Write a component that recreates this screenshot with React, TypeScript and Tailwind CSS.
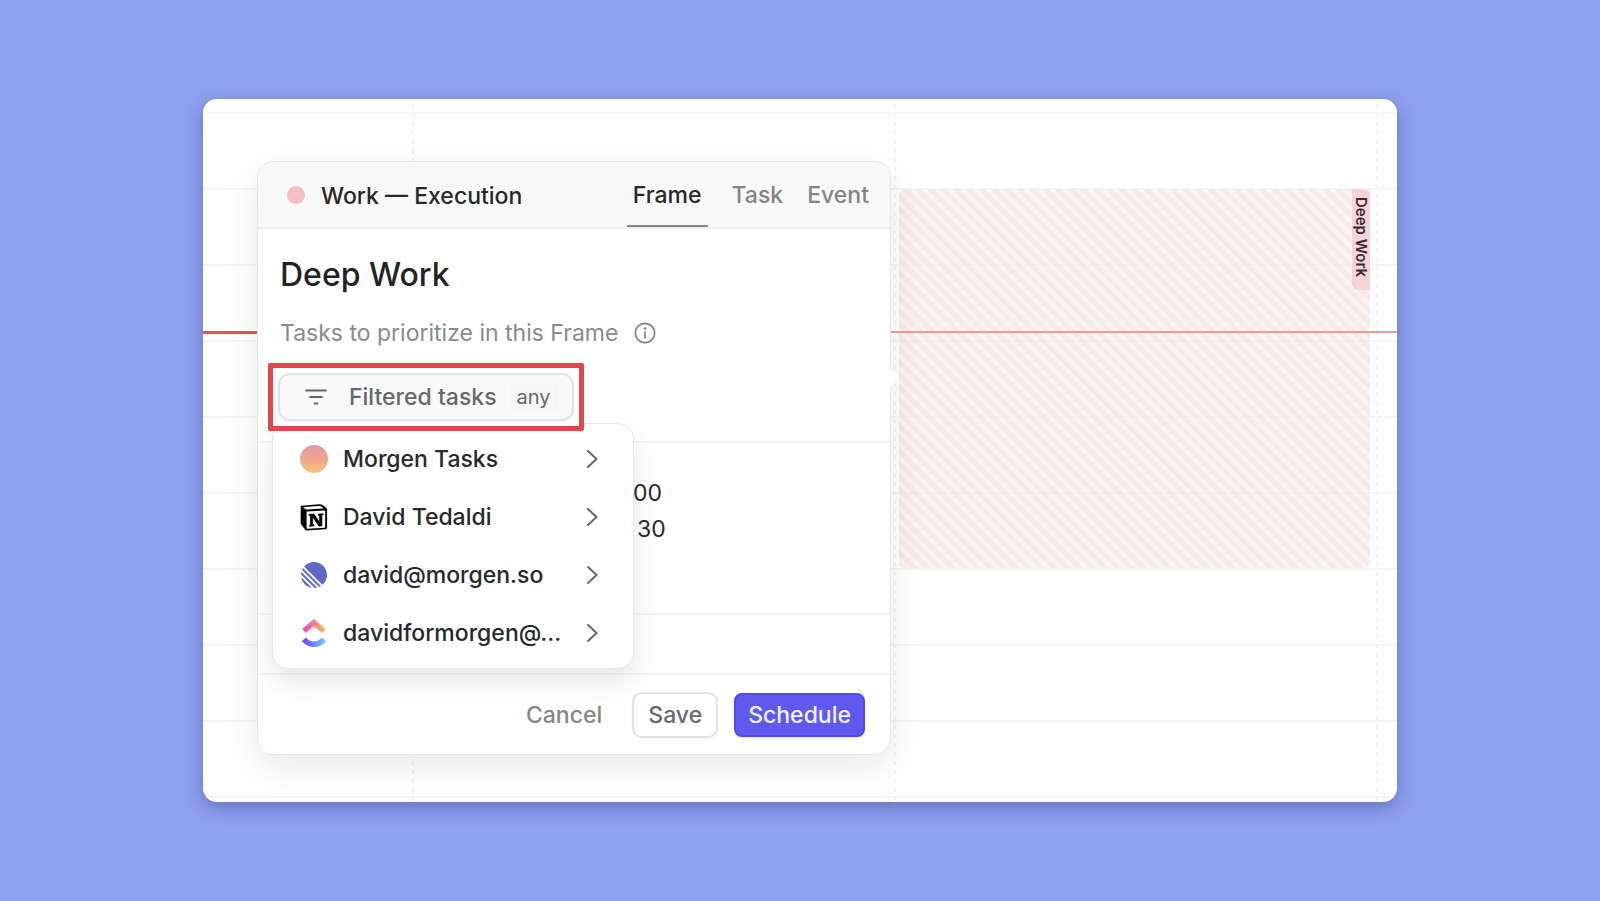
import React, { useState } from 'react';

const hours = [0, 1, 2, 3, 4, 5, 6, 7, 8];
const tabs = ['Frame', 'Task', 'Event'];

const MorgenIcon = () => (
  <span className="block size-7 rounded-full bg-linear-to-b from-[#e397a8] via-[#eda693] to-[#f4c66c]" />
);

const NotionIcon = () => (
  <svg viewBox="0 0 28 28" className="size-7">
    <path d="M1.5 2.8 19.3 1.2c1.2-.1 1.7 0 2.6.6l4.2 2.900c.8.6 1 .8 1 1.7v17.900c0 1.200-.5 1.900-1.900 2L7.400 27.400c-1.100.1-1.700-.2-2.300-1L1.400 21.700c-.5-.8-.7-1.300-.7-2V4.600c0-.9.3-1.700.8-1.800z" fill="#000" />
    <path d="M3.600 4 19.100 2.900c.8-.1 1 0 1.600.4l2.600 1.800c.2.2.1.4-.2.4L7 6.500c-.8 0-1.100-.1-1.600-.5L3.400 4.500c-.2-.2-.1-.4.2-.5z" fill="#fff" />
    <path d="M7.200 8.400 24.300 7.400c.6 0 .9.2.9.8v15.600c0 .6-.2.9-.9 1L7.600 25.700c-.7 0-1-.2-1-.9V9.200c0-.5.2-.8.6-.8z" fill="#fff" />
    <path d="M9.300 11.300 14 11l5.600 8.500V12.600l-1.500-.3c0-.8.4-1.300 1.200-1.300l4.100-.2v.6l-1.500.5v10.700c-.7.3-1.400.6-2 .6-.9 0-1.200-.3-1.900-1.200L12.600 13.800v7.700l1.700.4s0 1-1.400 1.100l-3.700.2c-.1-.2 0-.7.3-.8l1-.3V12.500l-1.600-.1c0-.5 0-1 .4-1.100z" fill="#000" stroke="#000" strokeWidth=".7" />
  </svg>
);

const LinearIcon = () => (
  <svg viewBox="0 0 100 100" className="size-[26px]">
    <path
      fill="#5f68c9"
      d="M1.225 61.523c-.222-.949.908-1.546 1.597-.857l36.512 36.512c.69.69.092 1.820-.857 1.597-18.425-4.323-32.930-18.827-37.252-37.252ZM.002 46.889a.99.990 0 0 0 .290.760L52.350 99.708c.201.200.478.307.760.290 2.370-.149 4.695-.460 6.963-.927.765-.157 1.030-1.096.478-1.648L2.576 39.448c-.552-.551-1.491-.286-1.648.479a50.067 50.067 0 0 0-.926 6.962ZM4.210 29.705a.988.988 0 0 0 .208 1.100l64.776 64.776c.289.290.726.375 1.100.208a49.908 49.908 0 0 0 5.185-2.684.981.981 0 0 0 .183-1.540L8.436 24.336a.981.981 0 0 0-1.541.183 49.896 49.896 0 0 0-2.684 5.186Zm8.448-11.631a.986.986 0 0 1-.045-1.354C21.780 6.460 35.111 0 49.952 0 77.592 0 100 22.407 100 50.048c0 14.840-6.460 28.172-16.720 37.338a.986.986 0 0 1-1.354-.045L12.659 18.074Z"
    />
  </svg>
);

const ClickUpIcon = () => (
  <svg viewBox="0 0 24 28" className="h-7 w-6" fill="none" strokeWidth="5.500">
    <defs>
      <linearGradient id="clickup-top" x1="0" y1="0" x2="1" y2="0">
        <stop offset="0" stopColor="#e750c8" />
        <stop offset=".55" stopColor="#f4818a" />
        <stop offset="1" stopColor="#f8bd55" />
      </linearGradient>
      <linearGradient id="clickup-bottom" x1="0" y1="0" x2="1" y2="0">
        <stop offset="0" stopColor="#7448f2" />
        <stop offset="1" stopColor="#6fc3fb" />
      </linearGradient>
    </defs>
    <path d="M2 12 12 3.600 22 12" stroke="url(#clickup-top)" />
    <path d="M2 20.300c5.400 6.600 14.600 6.600 20 0" stroke="url(#clickup-bottom)" />
  </svg>
);

const FilterIcon = () => (
  <svg viewBox="0 0 22 16" className="h-4 w-[22px]" stroke="#66686c" strokeWidth="2" strokeLinecap="round">
    <path d="M1 1.500h20M5 8h12M9.500 14.500h3" />
  </svg>
);

const InfoIcon = () => (
  <svg viewBox="0 0 22 22" className="size-[22px]" fill="none" stroke="#808080" strokeWidth="1.700">
    <circle cx="11" cy="11" r="9.700" />
    <path d="M11 10v6" strokeLinecap="round" />
    <circle cx="11" cy="6.500" r="1.300" fill="#808080" stroke="none" />
  </svg>
);

const ChevronIcon = () => (
  <svg viewBox="0 0 12 20" className="h-5 w-3" fill="none" stroke="#66686c" strokeWidth="2" strokeLinecap="round">
    <path d="M2 2l8.500 8L2 18" />
  </svg>
);

const sources = [
  { name: 'Morgen Tasks', icon: <MorgenIcon /> },
  { name: 'David Tedaldi', icon: <NotionIcon /> },
  { name: 'david@morgen.so', icon: <LinearIcon /> },
  { name: 'davidformorgen@...', icon: <ClickUpIcon /> },
];

const DashedLine = () => (
  <div className="mt-[5px] w-0.5 bg-[repeating-linear-gradient(to_bottom,#f3f3f3_0_4px,transparent_4px_9px)]" />
);

const Calendar = () => (
  <>
    <div className="h-[15px] border-b-2 border-[#f7f7f7]" />
    {hours.map((hour) => (
      <div key={hour} className="h-19 border-b-2 border-[#f5f5f5]" />
    ))}
    <div className="h-1" />

    <div className="absolute inset-0 grid grid-cols-[209px_1fr_1fr_21px]">
      <div />
      <div className="flex">
        <DashedLine />
      </div>
      <div className="flex">
        <DashedLine />
        <div className="mt-[90px] mr-1.5 ml-[3px] flex h-[379px] flex-1 justify-end rounded-md bg-[repeating-linear-gradient(45deg,#f3e0dfaa_0_4px,#fbeceb99_5px_8px,#f3e0dfaa_9px)]">
          <span className="flex h-[101px] w-[18px] items-center rounded-tr-md rounded-bl-md bg-[#f5d3d6] pt-2 text-[15px] font-semibold text-[#3b2d33] [writing-mode:vertical-rl]">
            Deep Work
          </span>
        </div>
      </div>
      <div className="flex">
        <DashedLine />
      </div>
    </div>
    <div className="absolute inset-x-0 top-[232px] h-0.5 bg-[#eb9c9c]" />
    <div className="absolute top-[232px] left-0 h-[3px] w-14 bg-[#e25750]" />
  </>
);

const TaskFilter = () => (
  <div className="relative ml-2.5 w-[316px]">
    <div className="relative z-20 rounded-xs border-[5px] border-[#e24649] bg-white p-[5px]">
      <button className="flex h-12 w-full items-center rounded-xl border-2 border-[#e2e3e5] bg-[#f9f9f9] pl-[25px] font-medium text-[#66686c] shadow-xs">
        <FilterIcon />
        <span className="ml-[22px] text-[23px]">Filtered tasks</span>
        <span className="ml-3 rounded-md bg-[#f6f6f6] px-2 text-xl font-normal">any</span>
      </button>
    </div>
    <ul className="absolute top-[60px] left-1 z-10 w-[362px] rounded-2xl border border-[#e9e9e9] bg-white py-1.5 shadow-[0_12px_28px_rgba(0,0,0,0.1)]">
      {sources.map((source) => (
        <li key={source.name}>
          <button className="flex h-[58px] w-full items-center pr-[35px] pl-[25px] text-[23px] font-medium text-[#27282b]">
            <span className="flex w-8 justify-center">{source.icon}</span>
            <span className="ml-[13px] flex-1 text-left">{source.name}</span>
            <ChevronIcon />
          </button>
        </li>
      ))}
    </ul>
  </div>
);

const App: React.FC = () => {
  const [tab, setTab] = useState('Frame');
  const [title, setTitle] = useState('Deep Work');

  return (
    <main className="flex min-h-screen items-center justify-center bg-[#8fa0ef] px-4 font-['Inter',sans-serif]">
      <div className="relative w-full max-w-[1194px] overflow-hidden rounded-[14px] bg-white shadow-[0_6px_18px_rgba(40,50,120,0.4)]">
        <Calendar />

        <section className="absolute top-[62px] left-[54px] w-[634px] rounded-2xl border border-[#e7e7e7] bg-white shadow-[0_12px_36px_rgba(0,0,0,0.09)]">
          <header className="flex h-[67px] items-center rounded-t-2xl border-b-2 border-[#ececec] bg-[#f8f8f8] pr-[21px] pl-[29px]">
            <span className="size-[18px] rounded-full bg-[#f1c0c3]" />
            <h1 className="ml-4 pt-1 text-[23px] font-medium text-[#27282b]">Work — Execution</h1>
            <nav className="ml-auto flex h-full gap-6">
              {tabs.map((name) => (
                <button
                  key={name}
                  onClick={() => setTab(name)}
                  className={
                    name === tab
                      ? 'border-b-2 border-[#858585] px-1.5 pt-1 text-[23px] font-medium text-[#27282b]'
                      : 'border-b-2 border-transparent pt-1 text-[23px] font-medium text-[#858585]'
                  }
                >
                  {name}
                </button>
              ))}
            </nav>
          </header>

          <div className="pb-2.5">
            <input
              aria-label="Title"
              value={title}
              onChange={(e) => setTitle(e.target.value)}
              className="mt-[26px] block h-10 w-full px-[22px] text-[32px] font-medium text-[#222326] outline-none"
            />
            <p className="mt-[22px] mb-3.5 flex h-8 items-center gap-4 pl-[22px] text-[23px] text-[#8a8a8a]">
              Tasks to prioritize in this Frame
              <InfoIcon />
            </p>
            <TaskFilter />
          </div>

          <div className="h-[172px] border-t-2 border-[#f4f4f4] pt-8 pl-[375px] text-[23px] leading-9 text-[#27282b]">
            <p>00</p>
            <p className="pl-1">30</p>
          </div>
          <div className="h-15 border-t-2 border-[#f4f4f4]" />
          <footer className="flex h-[81px] items-center justify-end gap-4 border-t-2 border-[#f4f4f4] pr-[25px] text-[23px] font-medium">
            <button className="px-3.5 pt-0.5 text-[#858585]">Cancel</button>
            <button className="h-[46px] rounded-[10px] border-2 border-[#e3e3e3] bg-white px-3.5 pt-0.5 text-[#66686c] shadow-xs">
              Save
            </button>
            <button className="h-11 rounded-lg border-2 border-[#5549e4] bg-[#6059f0] px-3 pt-0.5 text-[#f3f2ff] shadow-sm">
              Schedule
            </button>
          </footer>
        </section>
        <div className="absolute top-[270px] left-[675px] size-[18px] rotate-45 rounded-xs bg-white" />
      </div>
    </main>
  );
};

export default App;
